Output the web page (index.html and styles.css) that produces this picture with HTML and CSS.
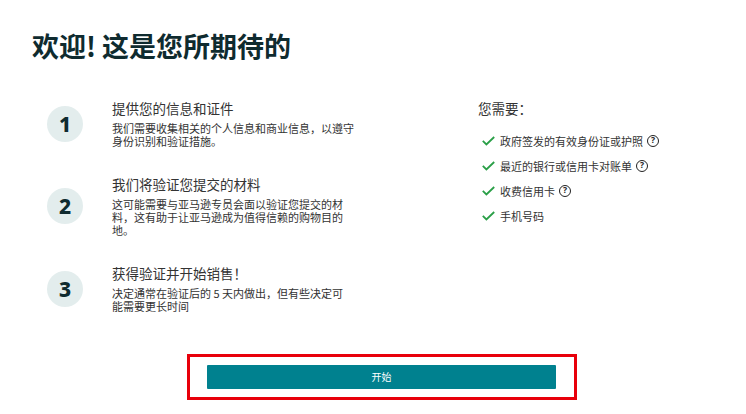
FILE: index.html
```html
<!DOCTYPE html>
<html lang="zh-CN">
<head>
<meta charset="utf-8">
<title>欢迎</title>
<link rel="stylesheet" href="styles.css">
</head>
<body>
<div class="page">
  <h1 class="title">欢迎! 这是您所期待的</h1>
  <div class="main">
    <div class="steps">
      <div class="step">
        <div class="num">1</div>
        <div class="step-body">
          <div class="step-title">提供您的信息和证件</div>
          <p class="step-desc">我们需要收集相关的个人信息和商业信息，以遵守身份识别和验证措施。</p>
        </div>
      </div>
      <div class="step">
        <div class="num">2</div>
        <div class="step-body">
          <div class="step-title">我们将验证您提交的材料</div>
          <p class="step-desc">这可能需要与亚马逊专员会面以验证您提交的材料，这有助于让亚马逊成为值得信赖的购物目的地。</p>
        </div>
      </div>
      <div class="step">
        <div class="num">3</div>
        <div class="step-body">
          <div class="step-title">获得验证并开始销售！</div>
          <p class="step-desc">决定通常在验证后的 5 天内做出，但有些决定可能需要更长时间</p>
        </div>
      </div>
    </div>
    <div class="needs">
      <div class="needs-title">您需要：</div>
      <ul class="needs-list">
        <li><svg class="check" width="13" height="10" viewBox="0 0 13 10"><polyline points="0.8,4.8 4.4,8.4 12.2,1" fill="none" stroke="#2a9f47" stroke-width="1.8"/></svg><span>政府签发的有效身份证或护照</span><span class="help">?</span></li>
        <li><svg class="check" width="13" height="10" viewBox="0 0 13 10"><polyline points="0.8,4.8 4.4,8.4 12.2,1" fill="none" stroke="#2a9f47" stroke-width="1.8"/></svg><span>最近的银行或信用卡对账单</span><span class="help">?</span></li>
        <li><svg class="check" width="13" height="10" viewBox="0 0 13 10"><polyline points="0.8,4.8 4.4,8.4 12.2,1" fill="none" stroke="#2a9f47" stroke-width="1.8"/></svg><span>收费信用卡</span><span class="help">?</span></li>
        <li><svg class="check" width="13" height="10" viewBox="0 0 13 10"><polyline points="0.8,4.8 4.4,8.4 12.2,1" fill="none" stroke="#2a9f47" stroke-width="1.8"/></svg><span>手机号码</span></li>
      </ul>
    </div>
  </div>
  <div class="cta-frame">
    <button class="cta">开始</button>
  </div>
</div>
</body>
</html>
```

FILE: styles.css
```css
html, body {
  margin: 0;
  padding: 0;
  background: #ffffff;
}
body {
  font-family: "Noto Sans CJK SC", "Noto Sans", sans-serif;
  color: #333333;
}
.page {
  width: 746px;
  height: 414px;
  overflow: hidden;
}
.title {
  margin: 0;
  padding: 29px 0 0 32px;
  font-size: 27px;
  line-height: 33px;
  font-weight: 700;
  color: #0f2b2f;
}
.main {
  display: grid;
  grid-template-columns: 310px 1fr;
  column-gap: 121px;
  margin-top: 37px;
  padding-left: 47px;
}
.steps {
  display: flex;
  flex-direction: column;
  gap: 27px;
}
.step {
  display: flex;
  align-items: center;
  gap: 29px;
}
.num {
  flex: none;
  width: 36px;
  height: 36px;
  border-radius: 50%;
  background: #e3eded;
  color: #0f2b2f;
  font-family: "Noto Sans", sans-serif;
  font-weight: 800;
  font-size: 21px;
  line-height: 36px;
  text-align: center;
}
.step-body {
  width: 242px;
}
.step-title {
  font-size: 13.5px;
  line-height: 18px;
  color: #333333;
}
.step-desc {
  margin: 5px 0 0;
  font-size: 11px;
  line-height: 13px;
  color: #333333;
}
.needs-title {
  font-size: 13.5px;
  line-height: 18px;
  color: #333333;
}
.needs-list {
  list-style: none;
  margin: 11px 0 0;
  padding: 0 0 0 4px;
}
.needs-list li {
  display: flex;
  align-items: center;
  height: 25px;
  font-size: 11px;
  color: #333333;
}
.check {
  flex: none;
  margin-right: 5px;
}
.help {
  flex: none;
  display: inline-flex;
  align-items: center;
  justify-content: center;
  width: 10px;
  height: 10px;
  margin-left: 4px;
  border: 1.3px solid #222222;
  border-radius: 50%;
  font-family: "Noto Sans", sans-serif;
  font-size: 8.5px;
  font-weight: 700;
  line-height: 1;
  color: #222222;
}
.cta-frame {
  width: fit-content;
  margin: 41px 0 0 187px;
  padding: 8px 18px 8px 17px;
  border: 3px solid #e8000b;
}
.cta {
  display: block;
  width: 349px;
  height: 24px;
  margin: 0;
  padding: 0;
  border: none;
  border-radius: 1px;
  background: #00818f;
  color: #ffffff;
  font-family: "Noto Sans CJK SC", "Noto Sans", sans-serif;
  font-size: 10px;
  line-height: 24px;
  text-align: center;
}
```
